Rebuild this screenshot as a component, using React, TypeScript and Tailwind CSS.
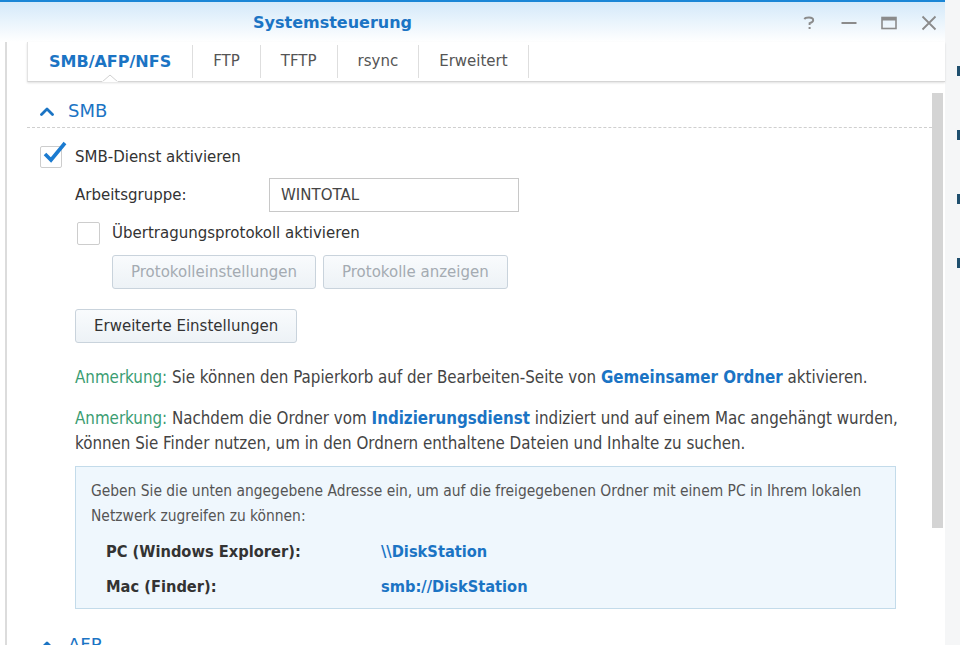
import React from 'react'

const blue = 'text-[#1b74c4]'

function Chevron() {
  return (
    <svg width="14" height="10" viewBox="0 0 14 10" className="shrink-0">
      <polyline points="1.5,8.5 7,3 12.5,8.5" fill="none" stroke="#1b74c4" strokeWidth="2.8" strokeLinecap="round" strokeLinejoin="round" />
    </svg>
  )
}

function WinButtons() {
  return (
    <div className="flex items-center gap-[24px] pr-[8px]">
      {/* help */}
      <svg width="16" height="16" viewBox="0 0 16 16">
        <path d="M3.5 4.2 Q4 2.5 8 2.5 Q12.2 2.5 12.2 5.3 Q12.2 7.2 8.6 8.2 L8.6 10" fill="none" stroke="#8b8b8b" strokeWidth="1.9" />
        <rect x="7.6" y="12" width="2" height="2" fill="#8b8b8b" />
      </svg>
      {/* minimise */}
      <svg width="16" height="16" viewBox="0 0 16 16">
        <rect x="0.5" y="7" width="15" height="2" fill="#8b8b8b" />
      </svg>
      {/* maximise */}
      <svg width="16" height="16" viewBox="0 0 16 16">
        <rect x="1" y="2.5" width="14" height="11" fill="none" stroke="#8b8b8b" strokeWidth="1.6" />
        <rect x="1" y="2.5" width="14" height="3" fill="#8b8b8b" />
      </svg>
      {/* close */}
      <svg width="16" height="16" viewBox="0 0 16 16">
        <path d="M1.5 1.5 L14.5 14.5 M14.5 1.5 L1.5 14.5" stroke="#8b8b8b" strokeWidth="1.8" />
      </svg>
    </div>
  )
}

function Tabs() {
  const tabs = ['FTP', 'TFTP', 'rsync', 'Erweitert']
  return (
    <div className="h-[40px] shrink-0 flex items-stretch bg-white border-l border-[#e3e3e3] border-b border-b-[#d5d5d5] shadow-[0_1px_2px_rgba(0,0,0,0.12)] relative">
      <div className="relative flex items-center px-[21px] font-bold text-[16px] text-[#1b74c4]">
        SMB/AFP/NFS
        <svg width="16" height="8" viewBox="0 0 16 8" className="absolute bottom-[-1px] left-[74px]">
          <polyline points="0,8 8,1 16,8" fill="#fff" stroke="#d0d0d0" strokeWidth="1" />
          <rect x="0" y="7.4" width="16" height="1" fill="#fff" />
        </svg>
      </div>
      {tabs.map((t) => (
        <React.Fragment key={t}>
          <div className="w-px bg-[#dedede] my-[3px]" />
          <div className="flex items-center px-[20px] text-[15px] text-[#555]">{t}</div>
        </React.Fragment>
      ))}
      <div className="w-px bg-[#dedede] my-[3px]" />
    </div>
  )
}

function Btn({ label, disabled }: { label: string; disabled?: boolean }) {
  return (
    <button
      className={
        'h-[34px] px-[18px] rounded-[3px] border border-[#c9d3dc] bg-gradient-to-b from-[#f9fbfd] to-[#edf2f6] text-[15px] ' +
        (disabled ? 'text-[#a4abb2]' : 'text-[#333]')
      }
    >
      {label}
    </button>
  )
}

export default function App() {
  const cond = "font-['DejaVu_Sans_Condensed','DejaVu_Sans',sans-serif]"
  return (
    <div className="w-[960px] h-[645px] overflow-hidden flex bg-white font-['DejaVu_Sans',Verdana,sans-serif] text-[#333]">
      {/* window */}
      <div className="w-[945px] h-full flex flex-col">
        {/* title bar */}
        <div className="h-[42px] shrink-0 border-t-[2px] border-[#1a86d6] bg-gradient-to-b from-[#d4e9f9] to-white flex items-center pt-[1px]">
          <div className={'pl-[253px] flex-1 font-bold text-[16px] ' + blue}>Systemsteuerung</div>
          <WinButtons />
        </div>

        <div className="flex flex-1 min-h-0">
          {/* left edge */}
          <div className="w-[27px] shrink-0 flex">
            <div className="w-[5px]" />
            <div className="w-[2px] bg-[#dcdcdc]" />
          </div>

          <div className="flex-1 flex flex-col min-w-0">
            <Tabs />

            <div className="flex flex-1 min-h-0">
              {/* scrolling content */}
              <div className="w-[905px] shrink-0 overflow-hidden">
                <div className="h-[46px] pt-[12px] flex items-center gap-[14px] pl-[13px] border-b border-dashed border-[#cfcfcf]">
                  <Chevron />
                  <span className={'text-[18px] ' + blue}>SMB</span>
                </div>

                {/* SMB enable */}
                <div className="mt-[18px] flex items-center pl-[13px] h-[22px]">
                  <div className="relative w-[22px] h-[22px] border border-[#cdcdcd] rounded-[2px] bg-white">
                    <svg width="26" height="24" viewBox="0 0 26 24" className="absolute left-[1px] top-[-6px]">
                      <path d="M3 13 L9 19 L23 2" fill="none" stroke="#1b7bd0" strokeWidth="3.6" strokeLinejoin="miter" />
                    </svg>
                  </div>
                  <span className="ml-[13px] text-[15px]">SMB-Dienst aktivieren</span>
                </div>

                {/* workgroup */}
                <div className="mt-[10px] flex items-center pl-[48px]">
                  <span className="w-[194px] text-[15px]">Arbeitsgruppe:</span>
                  <div className="w-[250px] h-[34px] border border-[#c8c8c8] bg-white flex items-center px-[11px] text-[15px] text-[#444]">
                    WINTOTAL
                  </div>
                </div>

                {/* transfer log */}
                <div className="mt-[10px] flex items-center pl-[50px] h-[23px]">
                  <div className="w-[23px] h-[23px] border border-[#cdcdcd] rounded-[2px] bg-white" />
                  <span className="ml-[12px] text-[15px]">Übertragungsprotokoll aktivieren</span>
                </div>

                <div className="mt-[10px] flex gap-[7px] pl-[85px]">
                  <Btn label="Protokolleinstellungen" disabled />
                  <Btn label="Protokolle anzeigen" disabled />
                </div>

                <div className="mt-[20px] pl-[48px]">
                  <Btn label="Erweiterte Einstellungen" />
                </div>

                {/* notes */}
                <div className={'pl-[48px] text-[16.8px] leading-[25px] text-[#444] whitespace-nowrap ' + cond}>
                  <p className="mt-[22px]">
                    <span className="text-[#3b9d72]">Anmerkung:</span> Sie können den Papierkorb auf der Bearbeiten-Seite von{' '}
                    <span className="font-bold text-[#1b74c4]">Gemeinsamer Ordner</span> aktivieren.
                  </p>
                  <p className="mt-[16px]">
                    <span className="text-[#3b9d72]">Anmerkung:</span> Nachdem die Ordner vom{' '}
                    <span className="font-bold text-[#1b74c4]">Indizierungsdienst</span> indiziert und auf einem Mac angehängt wurden,
                    <br />
                    können Sie Finder nutzen, um in den Ordnern enthaltene Dateien und Inhalte zu suchen.
                  </p>

                  <div className="mt-[10px] w-[821px] border border-[#c3dbea] bg-[#eff7fd] pl-[15px] pt-[12px] pb-[9px] text-[15.4px] text-[#555] leading-[25px]">
                    <p>
                      Geben Sie die unten angegebene Adresse ein, um auf die freigegebenen Ordner mit einem PC in Ihrem lokalen
                      <br />
                      Netzwerk zugreifen zu können:
                    </p>
                    <div className="mt-[10px] ml-[15px] flex text-[16.3px] font-bold">
                      <span className="w-[275px] text-[#333]">PC (Windows Explorer):</span>
                      <span className="text-[#1b74c4]">\\DiskStation</span>
                    </div>
                    <div className="mt-[10px] ml-[15px] flex text-[16.3px] font-bold">
                      <span className="w-[275px] text-[#333]">Mac (Finder):</span>
                      <span className="text-[#1b74c4]">smb://DiskStation</span>
                    </div>
                  </div>
                </div>

                {/* next section, cut off by the window */}
                <div className="mt-[22px] flex items-center gap-[14px] pl-[13px]">
                  <Chevron />
                  <span className={'text-[18px] ' + blue}>AFP</span>
                </div>
              </div>

              {/* scrollbar */}
              <div className="w-[11px] shrink-0 pt-[11px]">
                <div className="h-[435px] bg-[#d4d4d4]" />
              </div>
            </div>
          </div>
        </div>
      </div>

      {/* desktop behind the window */}
      <div className="flex-1 bg-[#f5f6f7] flex flex-col items-end pt-[66px] gap-[54px]">
        <div className="w-[3px] h-[10px] bg-[#1f4f6e]" />
        <div className="w-[3px] h-[10px] bg-[#1f4f6e]" />
        <div className="w-[3px] h-[10px] bg-[#1f4f6e]" />
        <div className="w-[3px] h-[10px] bg-[#1f4f6e]" />
      </div>
    </div>
  )
}
